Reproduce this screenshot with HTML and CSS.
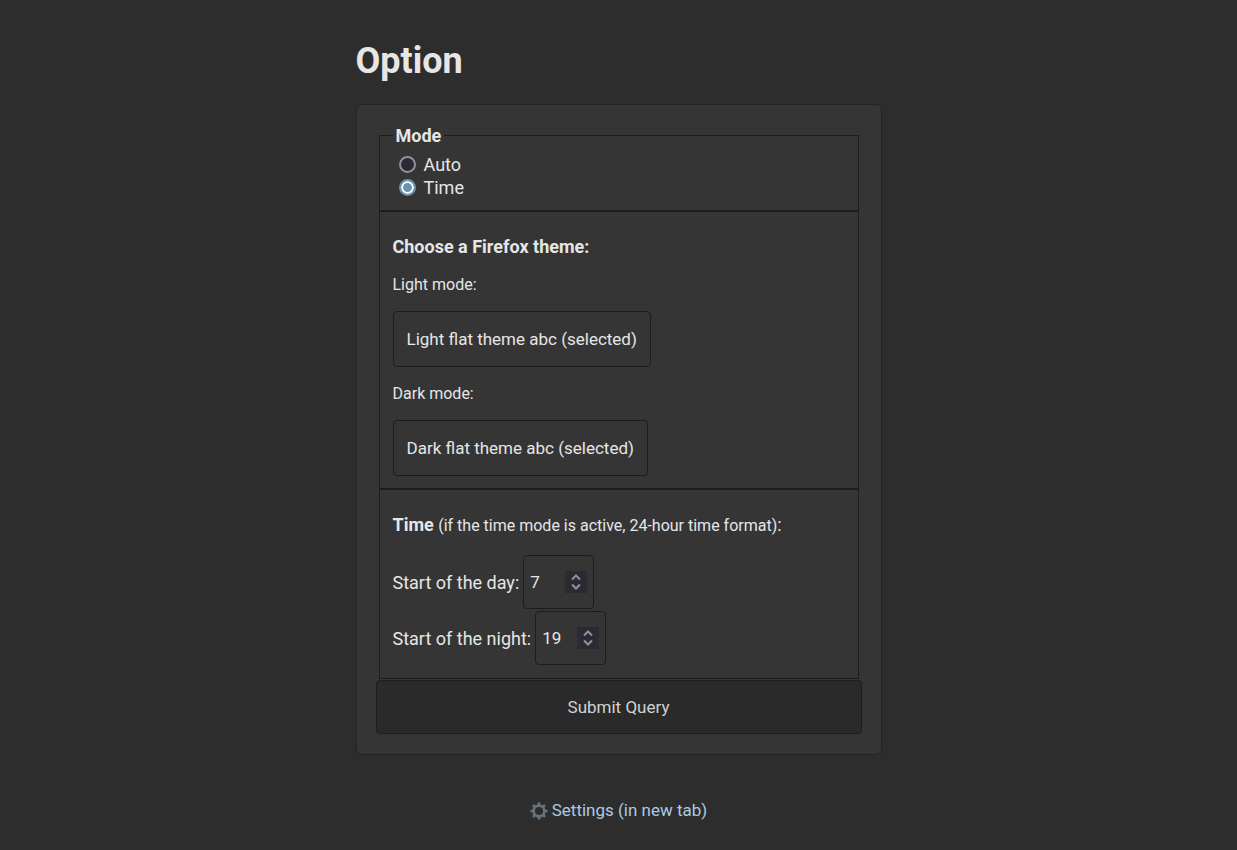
FILE: index.html
```html
<!DOCTYPE html>
<html lang="en">
<head>
<meta charset="utf-8">
<meta name="viewport" content="width=device-width, initial-scale=1">
<title>Option</title>
<link rel="stylesheet" href="styles.css">
</head>
<body>
<main class="page">
  <h1 class="title">Option</h1>
  <form class="card">
    <fieldset class="group mode">
      <legend class="legend">Mode</legend>
      <label class="choice"><input class="radio" type="radio" name="mode" value="auto">Auto</label>
      <label class="choice"><input class="radio" type="radio" name="mode" value="time" checked>Time</label>
    </fieldset>
    <section class="group themes">
      <h2 class="heading">Choose a Firefox theme:</h2>
      <p class="caption">Light mode:</p>
      <button class="theme" type="button">Light flat theme abc (selected)</button>
      <p class="caption">Dark mode:</p>
      <button class="theme" type="button">Dark flat theme abc (selected)</button>
    </section>
    <section class="group times">
      <p class="time-heading"><strong>Time</strong> <small class="note">(if the time mode is active, 24-hour time format)</small>:</p>
      <div class="row">
        <label for="day">Start of the day:</label>
        <span class="number">
          <input class="field" id="day" type="number" min="0" max="23" value="7">
          <svg class="spinner" viewBox="0 0 22 22" aria-hidden="true"><path d="M7 8.5 11 4.5 15 8.5M7 13.5 11 17.5 15 13.5"/></svg>
        </span>
      </div>
      <div class="row">
        <label for="night">Start of the night:</label>
        <span class="number">
          <input class="field" id="night" type="number" min="0" max="23" value="19">
          <svg class="spinner" viewBox="0 0 22 22" aria-hidden="true"><path d="M7 8.5 11 4.5 15 8.5M7 13.5 11 17.5 15 13.5"/></svg>
        </span>
      </div>
    </section>
    <button class="submit" type="submit">Submit Query</button>
  </form>
  <a class="settings" href="#settings">
    <svg class="gear" viewBox="0 0 18 18" aria-hidden="true">
      <circle class="rim" cx="9" cy="9" r="5.4"/>
      <path class="teeth" d="M9 .5V3.500M9 14.500V17.500M.5 9H3.500M14.500 9H17.500M3 3 5.100 5.100M12.900 12.900 15 15M3 15 5.100 12.900M12.900 5.100 15 3"/>
    </svg>
    <span>Settings (in new tab)</span>
  </a>
</main>
</body>
</html>
```
FILE: styles.css
```css
* {
  box-sizing: border-box;
}

body {
  margin: 0;
  background: #2d2d2d;
  color: #e6e6e6;
  font-family: Roboto, "Noto Sans", sans-serif;
  font-size: 18px;
  line-height: 21px;
}

.page {
  display: flex;
  flex-direction: column;
  max-width: 526px;
  margin: 0 auto;
  padding: 40px 0 28px;
}

.title {
  margin: 0 0 22px;
  font-size: 36px;
  line-height: 42px;
}

.card {
  display: flex;
  flex-direction: column;
  padding: 20px 22px;
  background: #353535;
  border: 1px solid #242424;
  border-radius: 6px;
}

.group {
  min-width: 0;
  margin: 0;
  padding: 24px 13px 12px;
  border: 1px solid #1d1d1d;
}

.mode {
  padding: 7px 13px 11px;
}

.legend {
  padding: 0 3px;
  font-weight: 700;
}

.choice {
  display: flex;
  align-items: center;
  gap: 8px;
  height: 23px;
  padding-left: 6px;
}

.radio {
  appearance: none;
  width: 17px;
  height: 17px;
  margin: 0;
  background: #2b2a33;
  border: 2px solid #8f8f9d;
  border-radius: 50%;
}

.radio:checked {
  background: #6a93b0;
  border-color: #6a93b0;
  box-shadow: inset 0 0 0 2px #fff;
}

.themes {
  display: flex;
  flex-direction: column;
  align-items: flex-start;
  gap: 17px;
}

.heading {
  margin: 0 0 1px;
  font-size: 18px;
}

.caption {
  margin: 0;
  font-size: 16px;
  line-height: 19px;
}

.theme,
.submit {
  color: inherit;
  border: 1px solid #1d1d1d;
  border-radius: 4px;
  font: inherit;
  font-size: 17px;
}

.theme {
  height: 56px;
  padding: 0 13px;
  background: #353535;
}

.times {
  display: flex;
  flex-direction: column;
  gap: 2px;
  padding-bottom: 13px;
}

.time-heading {
  margin: 0 0 17px;
}

.note {
  font-size: 16px;
}

.row {
  display: flex;
  align-items: center;
  gap: 4px;
}

.number {
  position: relative;
  display: flex;
}

.field {
  appearance: textfield;
  width: 71px;
  height: 54px;
  margin: 0;
  padding: 0 28px 0 6px;
  background: #353535;
  border: 1px solid #1d1d1d;
  border-radius: 4px;
  color: inherit;
  font: inherit;
  font-size: 17px;
}

.field::-webkit-inner-spin-button {
  appearance: none;
  margin: 0;
}

.spinner {
  position: absolute;
  top: 16px;
  right: 7px;
  width: 22px;
  height: 22px;
  background: #2b2a33;
  fill: none;
  stroke: #8f8f9d;
  stroke-width: 2;
  pointer-events: none;
}

.submit {
  height: 54px;
  margin: 1px -3px 0;
  background: #2a2a2a;
  color: #d2d2d2;
}

.settings {
  display: flex;
  align-items: center;
  align-self: center;
  gap: 4px;
  margin-top: 45px;
  color: #a9cbe3;
  font-size: 17px;
  text-decoration: none;
}

.gear {
  width: 18px;
  height: 18px;
  fill: none;
  stroke: #66747f;
}

.rim {
  stroke-width: 2.6;
}

.teeth {
  stroke-width: 2.6;
}
```
